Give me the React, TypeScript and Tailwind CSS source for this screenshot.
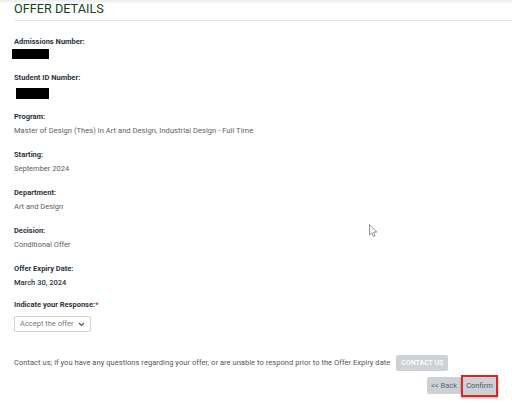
import React from 'react';

const FIELDS: { label: string; value: string; dark?: boolean; wide?: boolean }[] = [
  { label: 'Program:', value: 'Master of Design (Thes) in Art and Design, Industrial Design - Full Time', wide: true },
  { label: 'Starting:', value: 'September 2024' },
  { label: 'Department:', value: 'Art and Design' },
  { label: 'Decision:', value: 'Conditional Offer' },
  { label: 'Offer Expiry Date:', value: 'March 30, 2024', dark: true },
];

function Label({ children }: { children: React.ReactNode }) {
  return <div className="h-[10px] text-[7.5px] leading-[10px] font-bold text-[#2d3340]">{children}</div>;
}

export default function App() {
  return (
    <div
      className="relative h-[408px] w-[512px] overflow-hidden bg-white"
      style={{ fontFamily: 'Roboto, "Liberation Sans", sans-serif' }}
    >
      <div className="absolute inset-x-0 top-0 h-[4px] bg-gradient-to-b from-[#ececec] to-white" />

      <div className="ml-[14px] flex h-[21px] items-end border-b border-[#e6e6e6]">
        <h1 className="pb-[4px] text-[12.7px] leading-[14px] text-[#174417]">OFFER DETAILS</h1>
      </div>

      <div className="flex flex-col pl-[14px] pt-[16px]">
        <Label>Admissions Number:</Label>
        <div className="ml-[-2px] mt-[2px] h-[10px] w-[37px] bg-black" />

        <div className="mt-[14px]">
          <Label>Student ID Number:</Label>
        </div>
        <div className="ml-[2px] mt-[5px] h-[11px] w-[33px] bg-black" />

        {FIELDS.map((f, i) => (
          <div key={f.label} className={i === 0 ? 'mt-[13px]' : 'mt-[14px]'}>
            <Label>{f.label}</Label>
            <div
              className={`mt-[4px] h-[10px] text-[7.5px] leading-[10px] ${
                f.dark ? 'font-medium text-[#2d3340]' : 'text-[#606060]'
              } ${f.wide ? 'tracking-[0.06px]' : ''}`}
            >
              {f.value}
            </div>
          </div>
        ))}

        <div className="mt-[12px]">
          <Label>
            Indicate your Response:<span className="text-[#c0392b]">*</span>
          </Label>
        </div>
        <div className="mt-[6px] flex h-[16px] w-[77px] items-center justify-between rounded-[2px] border border-[#cfcfcf] bg-white pl-[5px] pr-[5px]">
          <span className="text-[7.5px] text-[#7a7a7a]">Accept the offer</span>
          <svg width="7" height="5" viewBox="0 0 7 5">
            <path d="M1 1l2.5 2.5L6 1" fill="none" stroke="#555" strokeWidth="1.2" />
          </svg>
        </div>

        <div className="mt-[23px] flex items-center gap-[6px]">
          <span className="text-[7.5px] tracking-[0.05px] text-[#555]">
            Contact us; if you have any questions regarding your offer, or are unable to respond prior to the Offer Expiry date
          </span>
          <button className="h-[16px] w-[52px] rounded-[2px] bg-[#ced2d7] text-[7px] font-medium text-white">
            CONTACT US
          </button>
        </div>

        <div className="mt-[4px] flex justify-end pr-[14px]">
          <button className="mt-[2px] h-[17px] w-[34px] rounded-[2px] bg-[#cdd1d6] text-[7.5px] text-[#5c6670]">
            &lt;&lt; Back
          </button>
          <div className="border-2 border-[#e0242a] shadow-[0_1px_2px_rgba(0,0,0,0.35)]">
            <button className="block h-[18px] w-[33px] bg-[#cdd1d6] text-[7.5px] text-[#4f5a64]">Confirm</button>
          </div>
        </div>
      </div>

      <svg className="absolute left-[369px] top-[224px]" width="9" height="14" viewBox="0 0 9 14">
        <path d="M0.5 0.5v10.5l2.4-2.3 1.6 3.8 1.6-0.7-1.6-3.7h3.3z" fill="white" stroke="#777" strokeWidth="0.8" />
      </svg>
    </div>
  );
}
